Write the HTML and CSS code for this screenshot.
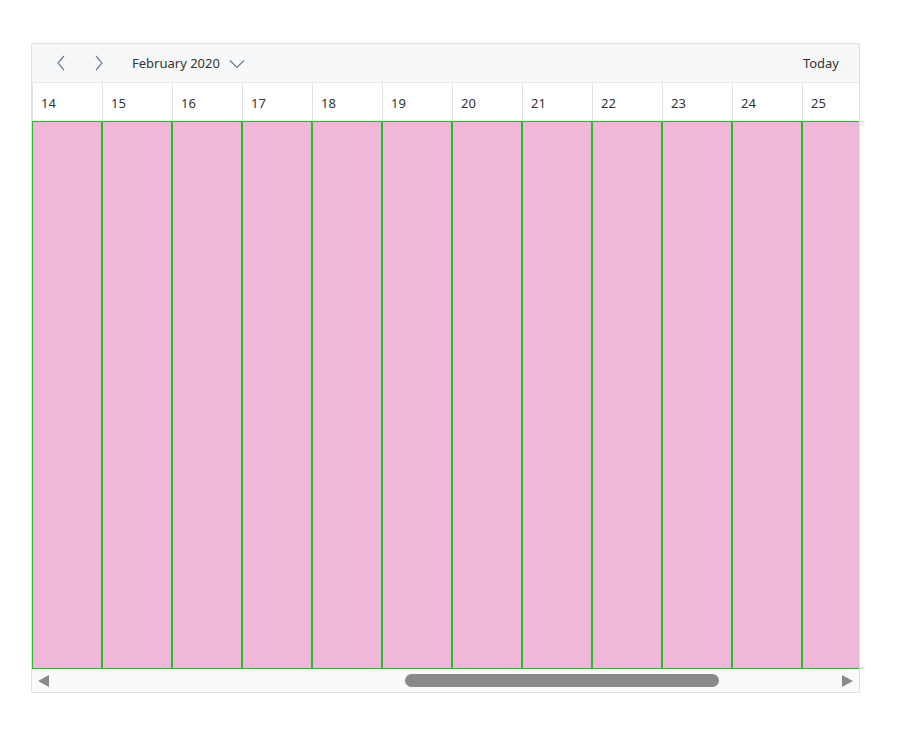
FILE: index.html
```html
<!DOCTYPE html>
<html>
<head>
<meta charset="utf-8">
<link rel="stylesheet" href="styles.css">
</head>
<body>
<div class="scheduler">
  <div class="toolbar">
    <button class="nav-btn" aria-label="Previous">
      <svg width="10" height="16" viewBox="0 0 10 16"><path d="M8 1 L2 8 L8 15" fill="none" stroke="#6f7f94" stroke-width="1.2"/></svg>
    </button>
    <button class="nav-btn" aria-label="Next">
      <svg width="10" height="16" viewBox="0 0 10 16"><path d="M2 1 L8 8 L2 15" fill="none" stroke="#6f7f94" stroke-width="1.2"/></svg>
    </button>
    <div class="period">
      <span>February 2020</span>
      <svg width="16" height="10" viewBox="0 0 16 10"><path d="M1 1.5 L8 8.5 L15 1.5" fill="none" stroke="#707a86" stroke-width="1.2"/></svg>
    </div>
    <div class="spacer"></div>
    <div class="today">Today</div>
  </div>
  <div class="header">
    <div class="hcell">14</div>
    <div class="hcell">15</div>
    <div class="hcell">16</div>
    <div class="hcell">17</div>
    <div class="hcell">18</div>
    <div class="hcell">19</div>
    <div class="hcell">20</div>
    <div class="hcell">21</div>
    <div class="hcell">22</div>
    <div class="hcell">23</div>
    <div class="hcell">24</div>
    <div class="hcell">25</div>
  </div>
  <div class="body">
    <div class="cell"></div>
    <div class="cell"></div>
    <div class="cell"></div>
    <div class="cell"></div>
    <div class="cell"></div>
    <div class="cell"></div>
    <div class="cell"></div>
    <div class="cell"></div>
    <div class="cell"></div>
    <div class="cell"></div>
    <div class="cell"></div>
    <div class="cell"></div>
  </div>
  <div class="scrollbar">
    <div class="arrow arrow-left"></div>
    <div class="track"><div class="thumb"></div></div>
    <div class="arrow arrow-right"></div>
  </div>
</div>
</body>
</html>
```

FILE: styles.css
```css
html, body {
  margin: 0;
  padding: 0;
  background: #ffffff;
}
body {
  padding: 43px 0 0 31px;
  font-family: "Noto Sans", "Open Sans", sans-serif;
  font-size: 13px;
  color: #333333;
}
.scheduler {
  width: 827px;
  height: 648px;
  border: 1px solid #e1e1e1;
  display: flex;
  flex-direction: column;
  overflow: hidden;
}
.toolbar {
  height: 38px;
  flex: none;
  background: #f7f8fa;
  border-bottom: 1px solid #e6e7ea;
  display: flex;
  align-items: center;
}
.nav-btn {
  border: 0;
  background: transparent;
  padding: 0;
  width: 38px;
  height: 38px;
  display: flex;
  align-items: center;
  justify-content: center;
}
.nav-btn:first-child {
  margin-left: 10px;
}
.period {
  margin-left: 14px;
  display: flex;
  align-items: center;
  gap: 9px;
  color: #333;
  font-size: 13px;
}
.period svg {
  margin-top: 1px;
}
.spacer {
  flex: 1;
}
.today {
  padding-right: 20px;
  color: #333;
}
.header {
  height: 38px;
  flex: none;
  display: flex;
  background: #fff;
}
.hcell {
  flex: none;
  width: 70px;
  box-sizing: border-box;
  border-left: 1px solid #e2e3e6;
  padding: 11px 0 0 8px;
  color: #333;
}
.body {
  height: 548px;
  flex: none;
  display: flex;
}
.cell {
  flex: none;
  width: 70px;
  height: 548px;
  box-sizing: border-box;
  background: #efb8d9;
  border: 1px solid #21c021;
}
.scrollbar {
  height: 23px;
  flex: none;
  background: #fafafa;
  display: flex;
  align-items: center;
}
.arrow {
  width: 0;
  height: 0;
  border-top: 6.5px solid transparent;
  border-bottom: 6.5px solid transparent;
}
.arrow-left {
  margin-left: 6px;
  border-right: 11px solid #8a8a8a;
}
.arrow-right {
  margin-right: 6px;
  border-left: 11px solid #8a8a8a;
}
.track {
  flex: 1;
  height: 13px;
  display: flex;
}
.thumb {
  margin-left: 356px;
  width: 314px;
  height: 13px;
  border-radius: 7px;
  background: #8a8a8a;
}
```
